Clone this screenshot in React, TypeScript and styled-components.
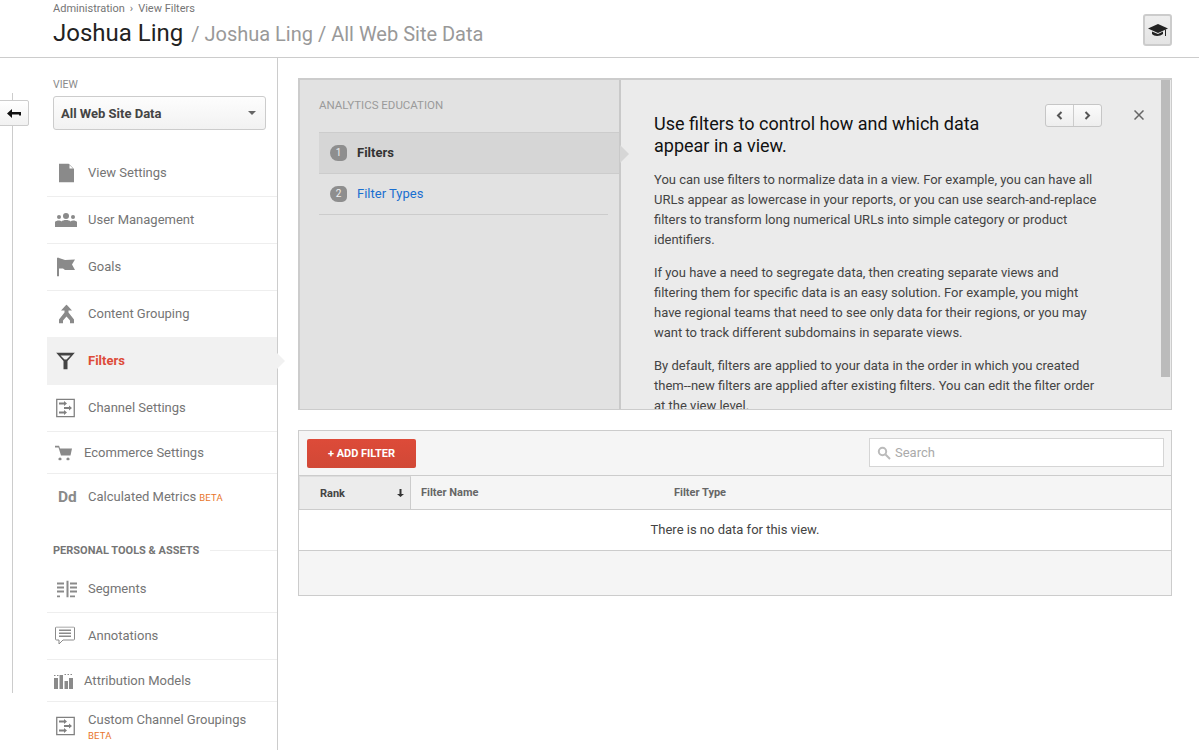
import React from "react";
import styled, { createGlobalStyle } from "styled-components";

const Global = createGlobalStyle`
  html, body { margin: 0; padding: 0; background: #fff; height: 750px; overflow: hidden; }
  body { font-family: Roboto, "Liberation Sans", sans-serif; color: #333; }
  * { box-sizing: border-box; }
`;

const Page = styled.div`
  width: 1199px;
  height: 750px;
  overflow: hidden;
  display: flex;
  flex-direction: column;
`;
const Header = styled.header`
  height: 58px;
  flex: none;
  border-bottom: 1px solid #ccc;
  padding: 2px 27px 0 53px;
  display: flex;
  justify-content: space-between;
`;
const Crumbs = styled.div`
  font-size: 11px;
  line-height: 13px;
  color: #757575;
  display: flex;
  gap: 5px;
`;
const Title = styled.div`
  margin-top: 3px;
  font-size: 20px;
  line-height: 30px;
  color: #999;
  white-space: nowrap;
`;
const TitleStrong = styled.span`
  font-size: 24px;
  color: #222;
  margin-right: 3px;
`;
const EduButton = styled.div`
  margin-top: 12px;
  width: 29px;
  height: 32px;
  border: 2px solid #ccc;
  border-radius: 3px;
  background: linear-gradient(#eee, #e4e4e4);
  display: flex;
  align-items: center;
  justify-content: center;
`;
const Body = styled.div`
  flex: 1;
  display: flex;
  min-height: 0;
`;
const Rail = styled.div`
  width: 47px;
  flex: none;
  position: relative;
`;
const RailLine = styled.div`
  position: absolute;
  left: 12px;
  top: 35px;
  width: 1px;
  height: 600px;
  background: #ccc;
`;
const BackButton = styled.div`
  position: absolute;
  left: -2px;
  top: 42px;
  width: 31px;
  height: 26px;
  background: linear-gradient(#fff, #f1f1f1);
  border: 1px solid #ccc;
  border-radius: 2px;
  display: flex;
  align-items: center;
  justify-content: center;
`;
const Sidebar = styled.aside`
  width: 231px;
  flex: none;
  border-right: 1px solid #ccc;
  position: relative;
  padding-top: 20px;
`;
const ViewLabel = styled.div`
  margin-left: 6px;
  font-size: 10.5px;
  line-height: 13px;
  color: #8a8a8a;
`;
const ViewSelect = styled.div`
  margin: 5px 0 0 6px;
  width: 213px;
  height: 34px;
  border: 1px solid #ccc;
  border-radius: 3px;
  background: linear-gradient(#fdfdfd, #f2f2f2);
  padding: 0 7px;
  display: flex;
  align-items: center;
  justify-content: space-between;
  font-size: 13px;
  font-weight: 700;
  color: #444;
`;
const Caret = styled.span`
  width: 0;
  height: 0;
  margin-right: 2px;
  border-left: 4px solid transparent;
  border-right: 4px solid transparent;
  border-top: 4px solid #666;
`;
const Nav = styled.nav`
  margin-top: 19px;
`;
const Row = styled.div<{ $h: number; $active?: boolean; $tight?: boolean; $plain?: boolean; $low?: boolean }>`
  height: ${(p) => p.$h}px;
  display: flex;
  align-items: center;
  position: relative;
  padding-left: ${(p) => (p.$tight ? 37 : 41)}px;
  padding-bottom: ${(p) => (p.$tight || p.$low ? 0 : 2)}px;
  font-size: 13px;
  color: ${(p) => (p.$active ? "#dd4b39" : "#757575")};
  font-weight: ${(p) => (p.$active ? 700 : 400)};
  background: ${(p) => (p.$active ? "#f1f1f1" : "transparent")};
  border-bottom: ${(p) => (p.$active || p.$plain ? "0" : "1px solid #eee")};
  ${(p) =>
    p.$active &&
    `&::after {
      content: "";
      position: absolute;
      right: -8px;
      top: 16px;
      border-left: 8px solid #f1f1f1;
      border-top: 8px solid transparent;
      border-bottom: 8px solid transparent;
    }`}
`;
const RowIcon = styled.span<{ $x: number }>`
  position: absolute;
  left: ${(p) => p.$x}px;
  top: 50%;
  transform: translateY(-50%);
  display: flex;
`;
const DdMark = styled.span`
  font-size: 15.5px;
  font-weight: 700;
  color: #8a8a8a;
  line-height: 16px;
`;
const Beta = styled.span`
  margin-left: 3px;
  font-size: 9.5px;
  color: #e8762b;
  letter-spacing: 0.2px;
  position: relative;
  top: 1px;
`;
const TwoLine = styled.div`
  display: flex;
  flex-direction: column;
  gap: 1px;
  line-height: 16px;
  margin-top: 4px;
`;
const BetaBelow = styled.span`
  font-size: 9.5px;
  line-height: 13px;
  color: #e8762b;
  letter-spacing: 0.2px;
`;
const SectionHead = styled.div`
  margin: 22px 0 8px 6px;
  height: 16px;
  display: flex;
  align-items: center;
  gap: 11px;
  font-size: 11px;
  font-weight: 700;
  color: #757575;
  white-space: nowrap;
  &::after {
    content: "";
    flex: 1;
    height: 1px;
    background: #eee;
  }
`;
const Main = styled.main`
  flex: 1;
  padding: 20px 27px 0 20px;
  min-width: 0;
`;
const Edu = styled.section`
  height: 332px;
  border: 1px solid #ccc;
  border-top-width: 2px;
  border-left-width: 2px;
  display: flex;
  background: #ebebeb;
  overflow: hidden;
  position: relative;
`;
const EduSide = styled.div`
  width: 321px;
  flex: none;
  background: #e2e2e2;
  border-right: 2px solid #c9c9c9;
  padding: 19px 0 0 19px;
  position: relative;
`;
const EduLabel = styled.div`
  font-size: 11.5px;
  line-height: 13px;
  color: #9a9a9a;
  height: 33px;
`;
const Step = styled.div<{ $active?: boolean }>`
  height: 39px;
  margin-right: ${(p) => (p.$active ? 0 : 11)}px;
  display: flex;
  align-items: center;
  padding: 0 0 1px 11px;
  gap: 10px;
  font-size: 13px;
  font-weight: ${(p) => (p.$active ? 700 : 400)};
  color: ${(p) => (p.$active ? "#333" : "#1a6fd0")};
  background: ${(p) => (p.$active ? "#d6d6d6" : "transparent")};
  border-bottom: 1px solid #ccc;
  box-sizing: content-box;
  ${(p) => p.$active && "border-top: 1px solid #ccc;"}
  ${(p) =>
    p.$active &&
    `position: relative;
     &::after {
       content: "";
       position: absolute;
       right: -10px;
       top: 12px;
       border-left: 9px solid #d6d6d6;
       border-top: 9px solid transparent;
       border-bottom: 9px solid transparent;
     }`}
`;
const StepNum = styled.span`
  width: 17px;
  height: 16px;
  border-radius: 8px 5px 5px 8px;
  background: #8e8e8e;
  color: #eee;
  font-size: 10px;
  font-weight: 400;
  display: flex;
  align-items: center;
  justify-content: center;
`;
const EduContent = styled.div`
  width: 480px;
  padding: 33px 0 0 33px;
  flex: none;
`;
const EduTitle = styled.h2`
  margin: 0 0 13px;
  font-size: 18px;
  line-height: 22px;
  font-weight: 400;
  color: #111;
  width: 345px;
`;
const Para = styled.p`
  margin: 0 0 13px;
  font-size: 13px;
  line-height: 20px;
  color: #444;
  white-space: nowrap;
`;
const Pager = styled.div`
  position: absolute;
  left: 745px;
  top: 24px;
  width: 57px;
  height: 23px;
  border: 1px solid #c6c6c6;
  border-radius: 3px;
  background: linear-gradient(#fbfbfb, #eee);
  display: flex;
`;
const PagerCell = styled.div<{ $divide?: boolean }>`
  flex: 1;
  display: flex;
  align-items: center;
  justify-content: center;
  border-right: ${(p) => (p.$divide ? "1px solid #ccc" : "0")};
`;
const Close = styled.div`
  position: absolute;
  left: 834px;
  top: 30px;
  display: flex;
`;
const Scrollbar = styled.div`
  position: absolute;
  right: 1px;
  top: 0;
  width: 9px;
  height: 297px;
  background: #bbb;
`;
const Table = styled.section`
  margin-top: 20px;
  border: 1px solid #ccc;
  background: #f5f5f5;
`;
const Toolbar = styled.div`
  height: 45px;
  padding: 8px 7px 0 8px;
  display: flex;
  justify-content: space-between;
  border-bottom: 1px solid #ccc;
`;
const AddButton = styled.div`
  width: 109px;
  height: 29px;
  border-radius: 2px;
  background: linear-gradient(#dd4b39, #d14836);
  color: #fff;
  font-size: 11px;
  font-weight: 700;
  display: flex;
  align-items: center;
  justify-content: center;
`;
const SearchBox = styled.div`
  width: 295px;
  height: 29px;
  margin-top: -1px;
  background: #fff;
  border: 1px solid #d5d5d5;
  display: flex;
  align-items: center;
  gap: 4px;
  padding-left: 7px;
  font-size: 13px;
  color: #aaa;
`;
const HeaderRow = styled.div`
  height: 34px;
  display: flex;
  align-items: center;
  font-size: 11px;
  font-weight: 700;
  color: #666;
  border-bottom: 1px solid #ccc;
`;
const RankCell = styled.div`
  width: 112px;
  height: 33px;
  flex: none;
  background: #ececec;
  border-left: 1px solid #ddd;
  border-top: 1px solid #ddd;
  border-right: 1px solid #ccc;
  color: #444;
  padding: 0 6px 0 20px;
  display: flex;
  align-items: center;
  justify-content: space-between;
`;
const NameCell = styled.div`
  width: 263px;
  padding-left: 10px;
  flex: none;
`;
const Empty = styled.div`
  height: 41px;
  background: #fff;
  border-bottom: 1px solid #ccc;
  padding: 0 0 2px;
  display: flex;
  align-items: center;
  justify-content: center;
  font-size: 13px;
  color: #444;
`;
const Footer = styled.div`
  height: 44px;
`;

const Ic = ({ w, h, children }: { w: number; h: number; children: React.ReactNode }) => (
  <svg width={w} height={h} viewBox={`0 0 ${w} ${h}`} fill="#8a8a8a">{children}</svg>
);

const TransferIcon = () => (
  <Ic w={19} h={19}>
    <path d="M.75.75h17.5v17.5H.75z" fill="none" stroke="#808080" strokeWidth="1.3" />
    <path d="M3 4h5V2.500L11 5 8 7.500V6H3zM8 8.500h5V7l3 2.500L13 12v-1.500H8zM3 13h5v-1.500L11 14l-3 2.500V15H3z" fill="#808080" />
  </Ic>
);

export default function App() {
  return (
    <Page>
      <Global />
      <Header>
        <div>
          <Crumbs>
            <span>Administration</span>
            <span>›</span>
            <span>View Filters</span>
          </Crumbs>
          <Title>
            <TitleStrong>Joshua Ling</TitleStrong> / Joshua Ling / All Web Site Data
          </Title>
        </div>
        <EduButton>
          <svg width="20" height="13" viewBox="0 0 20 13" fill="#222">
            <path d="M10 0 20 4.500 10 9 0 4.500z" />
            <path d="M4 7.500V10c2 2.500 8 2.500 11 0V7.500l-5 2.500z" />
            <path d="M17 5.500h1V12h-1z" />
          </svg>
        </EduButton>
      </Header>
      <Body>
        <Rail>
          <RailLine />
          <BackButton>
            <svg width="14" height="9" viewBox="0 0 14 9" fill="#111">
              <path d="M0 4.500 5 0v3h9v3.500h-2V5.500H5V9z" />
            </svg>
          </BackButton>
        </Rail>
        <Sidebar>
          <ViewLabel>VIEW</ViewLabel>
          <ViewSelect>
            All Web Site Data
            <Caret />
          </ViewSelect>
          <Nav>
            <Row $h={48} $low>
              <RowIcon $x={12}><Ic w={15} h={19}><path d="M0 0h9.500L15 5.500V19H0z" /><path d="M10.500 1.500v3.500H14z" fill="#fff" /></Ic></RowIcon>
              View Settings
            </Row>
            <Row $h={47}>
              <RowIcon $x={8}><Ic w={22} h={14}><circle cx="4" cy="4" r="2" /><circle cx="11" cy="3" r="3" /><circle cx="18" cy="4" r="2" /><path d="M0 14V9c1-1.500 5-2 6.500-.5C8 6.500 14 6.500 15.500 8.500 17 7 21 7.500 22 9v5z" /></Ic></RowIcon>
              User Management
            </Row>
            <Row $h={47}>
              <RowIcon $x={10}><Ic w={18} h={19}><path d="M0 0h2v19H0zM2 .5 8 2.500 18 2l-3 5 3 5.500H8L6 11H2z" /></Ic></RowIcon>
              Goals
            </Row>
            <Row $h={46} $plain>
              <RowIcon $x={12}><Ic w={15} h={19}><path d="M7.500 0 13 6H9.500v2L15 15v4h-4v-3l-3.500-4L4 16v3H0v-4l5.500-7V6H2z" /></Ic></RowIcon>
              Content Grouping
            </Row>
            <Row $h={48} $active>
              <RowIcon $x={9}><svg width="19" height="17" viewBox="0 0 19 17" fill="#444"><path d="M0 0h19l-7.500 8.500V17h-4V8.500zM4.500 3l4 4h2l4-4z" fillRule="evenodd" /></svg></RowIcon>
              Filters
            </Row>
            <Row $h={47}>
              <RowIcon $x={9}><TransferIcon /></RowIcon>
              Channel Settings
            </Row>
            <Row $h={42} $tight>
              <RowIcon $x={8}><Ic w={17} h={15}><path d="M0 0h4l1 3h12l-1.500 7H6L3.500 2H0z" /><circle cx="5" cy="13.500" r="1.600" /><circle cx="13" cy="13.500" r="1.600" /></Ic></RowIcon>
              Ecommerce Settings
            </Row>
            <Row $h={46} $plain>
              <RowIcon $x={11}><DdMark>Dd</DdMark></RowIcon>
              Calculated Metrics<Beta>BETA</Beta>
            </Row>
          </Nav>
          <SectionHead>PERSONAL TOOLS &amp; ASSETS</SectionHead>
          <Row $h={47}>
            <RowIcon $x={10}><Ic w={20} h={17}><path d="M9.500 0h2v17h-2zM0 2h7v2H0zM13 2h7v2h-7zM0 6h7v2H0zM13 6h7v2h-7zM0 10h7v2H0zM13 10h7v2h-7zM0 15h3v2H0zM13 15h5v2h-5z" /></Ic></RowIcon>
            Segments
          </Row>
          <Row $h={47}>
            <RowIcon $x={8}><Ic w={20} h={19}><path d="M1.500.5h17a1 1 0 0 1 1 1v11a1 1 0 0 1-1 1H8l-4 4v-4H1.500a1 1 0 0 1-1-1v-11a1 1 0 0 1 1-1z" fill="none" stroke="#8a8a8a" /><path d="M4 3h12v1.500H4zM4 6h12v1.500H4zM4 9h12v1.500H4z" /></Ic></RowIcon>
            Annotations
          </Row>
          <Row $h={42} $tight>
            <RowIcon $x={7}><Ic w={19} h={16}><path d="M0 5h4v11H0zM5.500 2h3.500v14H5.500zM10.500 8h3.500v8h-3.500zM15 5h4v11h-4zM0 2h1.500v1H0zM3 2h1.500v1H3zM10.500 1h1.500v1h-1.500zM13.500 1H15v1h-1.500zM16.500 1H18v1h-1.500z" /></Ic></RowIcon>
            Attribution Models
          </Row>
          <Row $h={48} $plain>
            <RowIcon $x={9}><TransferIcon /></RowIcon>
            <TwoLine>
              Custom Channel Groupings
              <BetaBelow>BETA</BetaBelow>
            </TwoLine>
          </Row>
        </Sidebar>
        <Main>
          <Edu>
            <EduSide>
              <EduLabel>ANALYTICS EDUCATION</EduLabel>
              <Step $active><StepNum>1</StepNum>Filters</Step>
              <Step><StepNum>2</StepNum>Filter Types</Step>
            </EduSide>
            <EduContent>
              <EduTitle>Use filters to control how and which data appear in a view.</EduTitle>
              <Para>You can use filters to normalize data in a view. For example, you can have all<br />URLs appear as lowercase in your reports, or you can use search-and-replace<br />filters to transform long numerical URLs into simple category or product<br />identifiers.</Para>
              <Para>If you have a need to segregate data, then creating separate views and<br />filtering them for specific data is an easy solution. For example, you might<br />have regional teams that need to see only data for their regions, or you may<br />want to track different subdomains in separate views.</Para>
              <Para>By default, filters are applied to your data in the order in which you created<br />them--new filters are applied after existing filters. You can edit the filter order<br />at the view level.</Para>
            </EduContent>
            <Pager>
              <PagerCell $divide>
                <svg width="7" height="9" viewBox="0 0 7 9" fill="none" stroke="#555" strokeWidth="2"><path d="M5.500 1 2 4.500 5.500 8" /></svg>
              </PagerCell>
              <PagerCell>
                <svg width="7" height="9" viewBox="0 0 7 9" fill="none" stroke="#555" strokeWidth="2"><path d="M1.500 1 5 4.500 1.500 8" /></svg>
              </PagerCell>
            </Pager>
            <Close>
              <svg width="10" height="10" viewBox="0 0 10 10" stroke="#666" strokeWidth="1.500"><path d="M.5.5l9 9M9.500.5l-9 9" /></svg>
            </Close>
            <Scrollbar />
          </Edu>
          <Table>
            <Toolbar>
              <AddButton>+ ADD FILTER</AddButton>
              <SearchBox>
                <svg width="14" height="14" viewBox="0 0 14 14" fill="none" stroke="#bbb" strokeWidth="2"><circle cx="5.500" cy="5.500" r="3.700" /><path d="M8.500 8.500 13 13" /></svg>
                Search
              </SearchBox>
            </Toolbar>
            <HeaderRow>
              <RankCell>
                Rank
                <svg width="7" height="8" viewBox="0 0 7 8" fill="#333"><path d="M2.500 0h2v5H7L3.500 8 0 5h2.500z" /></svg>
              </RankCell>
              <NameCell>Filter Name</NameCell>
              <div>Filter Type</div>
            </HeaderRow>
            <Empty>There is no data for this view.</Empty>
            <Footer />
          </Table>
        </Main>
      </Body>
    </Page>
  );
}
